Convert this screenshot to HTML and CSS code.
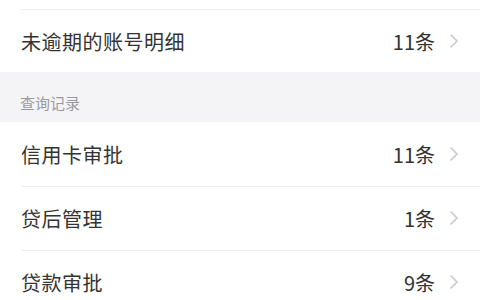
FILE: index.html
```html
<!DOCTYPE html>
<html lang="zh">
<head>
<meta charset="utf-8">
<link rel="stylesheet" href="styles.css">
</head>
<body>
<div class="page">
  <div class="group">
    <div class="stub"></div>
    <div class="row first">
      <span class="label">未逾期的账号明细</span>
      <span class="value">11条</span>
      <svg class="chev" viewBox="0 0 8 14" width="8" height="14"><path d="M1 1l6 6-6 6" fill="none" stroke="#c8c8cc" stroke-width="1.6" stroke-linecap="round" stroke-linejoin="round"/></svg>
    </div>
  </div>
  <div class="section">查询记录</div>
  <div class="group">
    <div class="row">
      <span class="label">信用卡审批</span>
      <span class="value">11条</span>
      <svg class="chev" viewBox="0 0 8 14" width="8" height="14"><path d="M1 1l6 6-6 6" fill="none" stroke="#c8c8cc" stroke-width="1.6" stroke-linecap="round" stroke-linejoin="round"/></svg>
    </div>
    <div class="row">
      <span class="label">贷后管理</span>
      <span class="value">1条</span>
      <svg class="chev" viewBox="0 0 8 14" width="8" height="14"><path d="M1 1l6 6-6 6" fill="none" stroke="#c8c8cc" stroke-width="1.6" stroke-linecap="round" stroke-linejoin="round"/></svg>
    </div>
    <div class="row">
      <span class="label">贷款审批</span>
      <span class="value">9条</span>
      <svg class="chev" viewBox="0 0 8 14" width="8" height="14"><path d="M1 1l6 6-6 6" fill="none" stroke="#c8c8cc" stroke-width="1.6" stroke-linecap="round" stroke-linejoin="round"/></svg>
    </div>
  </div>
</div>
</body>
</html>
```
FILE: styles.css
```css
html, body {
  margin: 0;
  padding: 0;
  background: #f4f4f6;
}
body {
  width: 480px;
  height: 300px;
  overflow: hidden;
  font-family: "Noto Sans CJK SC", "Noto Sans", sans-serif;
}
.page {
  display: flex;
  flex-direction: column;
}
.group {
  background: #ffffff;
  display: flex;
  flex-direction: column;
}
.stub {
  height: 10px;
  margin-left: 20px;
  border-bottom: 1px solid #f3eef2;
  box-sizing: border-box;
}
.row {
  height: 64px;
  display: flex;
  align-items: center;
  padding: 0 22px 0 21px;
  box-sizing: border-box;
  position: relative;
}
.row.first {
  height: 62px;
}
.row + .row::before {
  content: "";
  position: absolute;
  top: 0;
  left: 22px;
  right: 0;
  border-top: 1px solid #efeff2;
}
.label {
  flex: 1;
  font-size: 20px;
  color: #333333;
  letter-spacing: 0.5px;
}
.value {
  font-size: 20px;
  color: #333333;
  margin-right: 15px;
}
.chev {
  display: block;
}
.section {
  height: 50px;
  display: flex;
  align-items: flex-end;
  padding: 0 0 9px 20px;
  box-sizing: border-box;
  font-size: 15px;
  color: #9a9a9e;
}
```
